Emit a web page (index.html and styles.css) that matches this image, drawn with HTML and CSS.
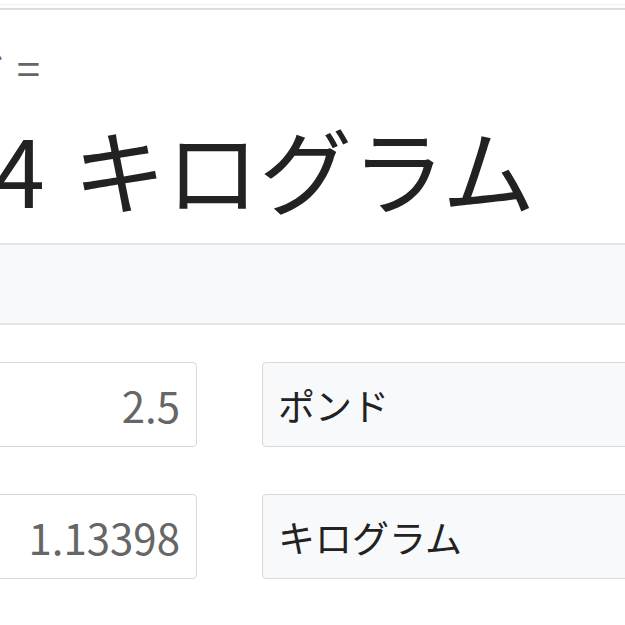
FILE: index.html
```html
<!DOCTYPE html>
<html lang="ja">
<head>
<meta charset="utf-8">
<title>単位換算</title>
<link rel="stylesheet" href="styles.css">
</head>
<body>
<div class="page">
  <div class="rule-faint"></div>
  <div class="rule"></div>
  <div class="query">2.5 ポンド =</div>
  <div class="answer"><span class="num">1.134</span><span class="unit">キログラム</span></div>
  <div class="band"></div>
  <div class="rows">
    <div class="row">
      <div class="field">2.5</div>
      <div class="select">ポンド</div>
    </div>
    <div class="row">
      <div class="field">1.13398</div>
      <div class="select">キログラム</div>
    </div>
  </div>
</div>
</body>
</html>
```
FILE: styles.css
```css
html, body {
  margin: 0;
  padding: 0;
  background: #ffffff;
}
body {
  width: 625px;
  height: 625px;
  overflow: hidden;
  font-family: "Noto Sans CJK JP", "Noto Sans", sans-serif;
}
.page {
  padding-top: 4px;
}
.rule-faint {
  border-top: 1px solid #f0f0f0;
  height: 3px;
}
.rule {
  border-top: 2px solid #dcdcdc;
}
.query {
  margin-left: -364px;
  width: 404px;
  margin-top: 36px;
  text-align: right;
  font-size: 42px;
  line-height: 42px;
  color: #666666;
  white-space: nowrap;
}
.answer {
  display: flex;
  margin-top: 33px;
  font-size: 93px;
  line-height: 93px;
  color: #222222;
  white-space: nowrap;
}
.num {
  margin-left: -300px;
  width: 345px;
  text-align: right;
}
.unit {
  margin-left: 28px;
}
.band {
  margin-top: 29px;
  height: 78px;
  background: #f8f9fa;
  border-top: 2px solid #e3e5e8;
  border-bottom: 2px solid #e3e5e8;
}
.rows {
  margin-top: 37px;
  display: flex;
  flex-direction: column;
  gap: 47px;
}
.row {
  display: flex;
  margin-left: -200px;
  width: 1000px;
}
.field {
  box-sizing: border-box;
  width: 397px;
  height: 85px;
  border: 1px solid #d9d9d9;
  border-radius: 4px;
  background: #ffffff;
  display: flex;
  align-items: center;
  justify-content: flex-end;
  padding-right: 16px;
  font-size: 42px;
  color: #666666;
}
.select {
  box-sizing: border-box;
  flex: 1;
  margin-left: 65px;
  height: 85px;
  border: 1px solid #d9d9d9;
  border-radius: 4px;
  background: #f8f9fa;
  display: flex;
  align-items: center;
  padding-left: 15px;
  font-size: 37px;
  color: #222222;
}
```
